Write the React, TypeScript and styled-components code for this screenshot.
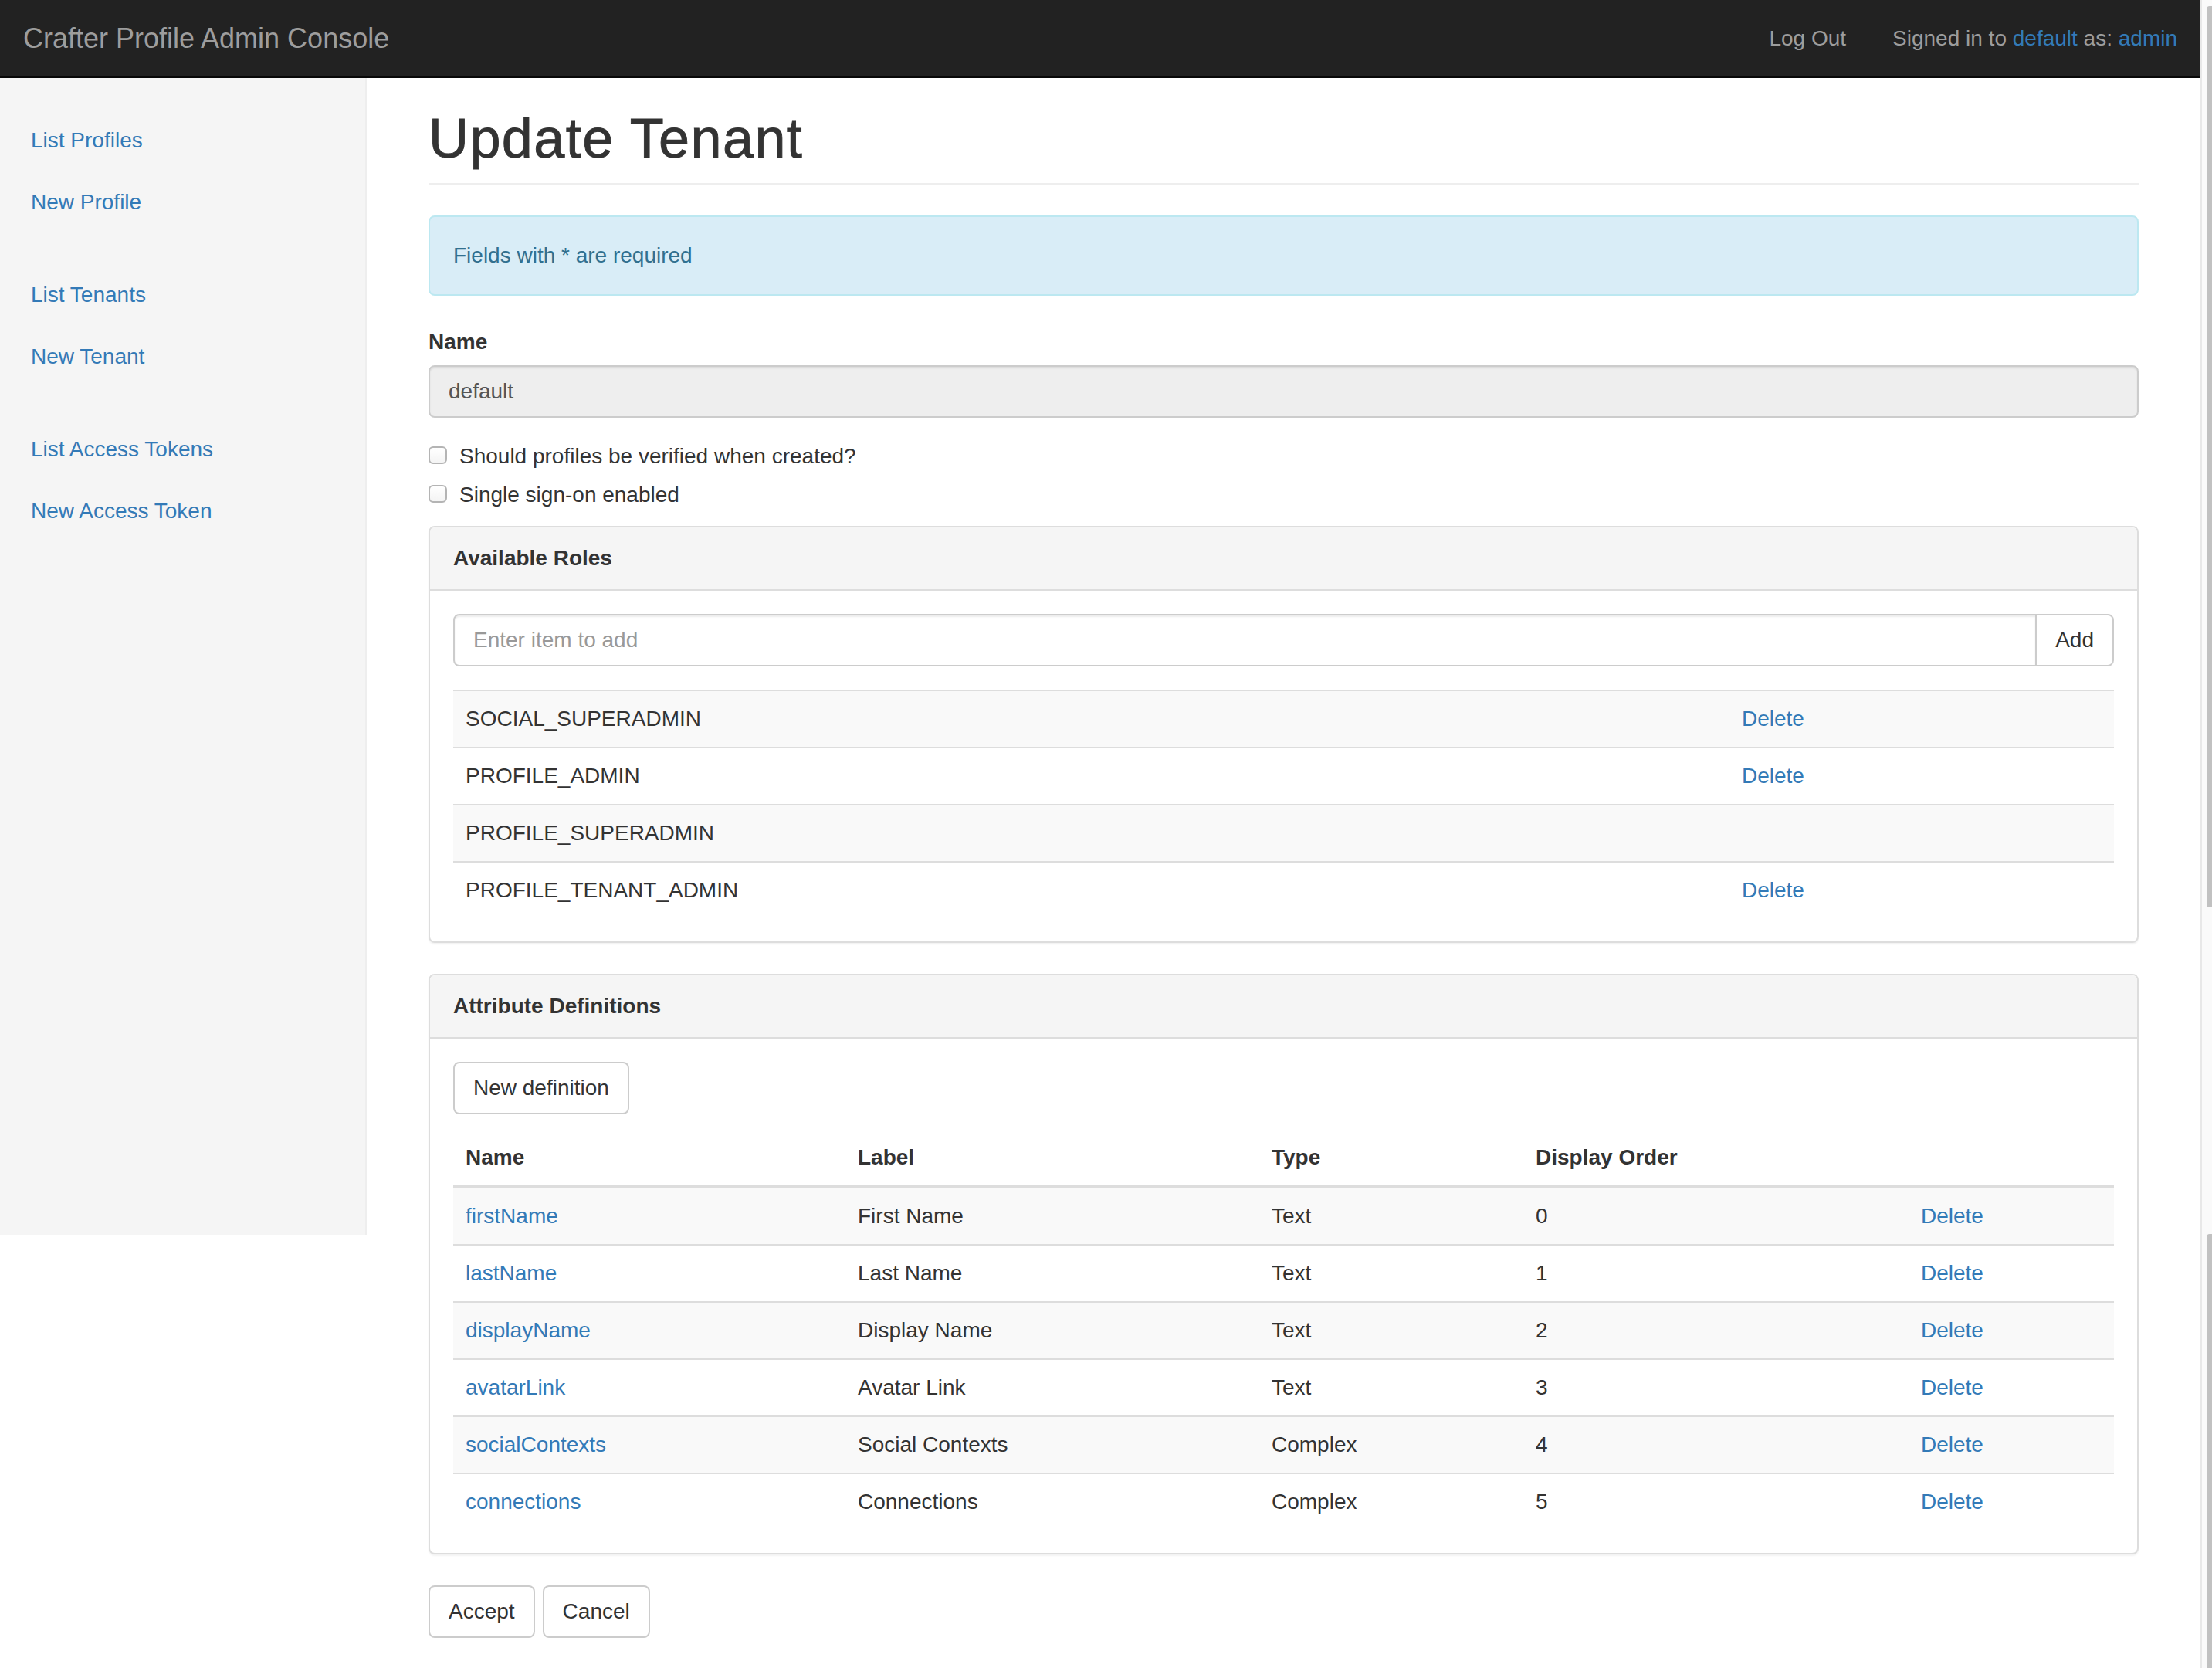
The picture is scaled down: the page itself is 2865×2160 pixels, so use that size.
import React from "react";
import styled, { createGlobalStyle } from "styled-components";

const GlobalStyle = createGlobalStyle`
  html, body {
    margin: 0;
    padding: 0;
    overflow: hidden;
    background: #fff;
  }
  body {
    font-family: "Liberation Sans", Arial, Helvetica, sans-serif;
    font-size: 28px;
    line-height: 40px;
    color: #333;
  }
  * { box-sizing: border-box; }
`;

const Shell = styled.div`
  display: flex;
  height: 2160px;
  overflow: hidden;
`;

const Page = styled.div`
  flex: 1;
  min-width: 0;
  display: flex;
  flex-direction: column;
`;

const ScrollTrack = styled.div`
  flex: none;
  width: 15px;
  background: #fafafa;
  border-left: 2px solid #e8e8e8;
  padding: 8px 0 0 6px;
  display: flex;
  flex-direction: column;
`;

const Thumb = styled.div<{ $h: number; $gap: number }>`
  flex: none;
  width: 7px;
  height: ${(p) => p.$h}px;
  margin-top: ${(p) => p.$gap}px;
  background: #c1c1c1;
  border-radius: 4px 0 0 4px;
`;

const Navbar = styled.nav`
  flex: none;
  height: 101px;
  background: #222;
  border-bottom: 2px solid #080808;
  display: flex;
  align-items: center;
  justify-content: space-between;
  padding-left: 30px;
`;

const Brand = styled.a`
  font-size: 36px;
  line-height: 40px;
  color: #9d9d9d;
  text-decoration: none;
`;

const NavRight = styled.div`
  display: flex;
  align-items: center;
`;

const NavLink = styled.a`
  color: #9d9d9d;
  text-decoration: none;
  padding: 0 30px;
`;

const NavText = styled.p`
  margin: 0 30px;
  color: #9d9d9d;
`;

const Link = styled.a`
  color: #337ab7;
  text-decoration: none;
`;

const Body = styled.div`
  display: flex;
  align-items: flex-start;
  flex: 1;
  min-height: 0;
`;

const Sidebar = styled.aside`
  flex: none;
  width: 475px;
  height: 1498px;
  background: #f5f5f5;
  border-right: 2px solid #eee;
  padding: 41px 0;
`;

const NavGroup = styled.ul`
  list-style: none;
  margin: 0 0 40px;
  padding: 0;
`;

const NavItem = styled.li`
  display: block;
`;

const SideLink = styled.a`
  display: block;
  padding: 20px 40px;
  color: #337ab7;
  text-decoration: none;
`;

const Main = styled.main`
  flex: 1;
  min-width: 0;
  padding: 39px 80px 0 80px;
`;

const PageHeader = styled.h1`
  margin: 0 0 40px;
  padding-bottom: 18px;
  border-bottom: 2px solid #eee;
  font-size: 72px;
  line-height: 1.1;
  font-weight: 500;
  letter-spacing: 1.4px;
  color: #333;
  -webkit-text-stroke: 0.9px #333;
`;

const Alert = styled.div`
  padding: 30px;
  margin-bottom: 40px;
  border: 2px solid #bce8f1;
  border-radius: 8px;
  background: #d9edf7;
  color: #31708f;
`;

const FormGroup = styled.div`
  margin-bottom: 30px;
`;

const FieldLabel = styled.label`
  display: block;
  margin-bottom: 10px;
  font-weight: bold;
`;

const TextInput = styled.input<{ $disabled?: boolean }>`
  display: block;
  width: 100%;
  height: 68px;
  padding: 12px 24px;
  font-family: inherit;
  font-size: 28px;
  line-height: 40px;
  color: #555;
  background: ${(p) => (p.$disabled ? "#eee" : "#fff")};
  border: 2px solid #ccc;
  border-radius: 8px;
  box-shadow: inset 0 2px 2px rgba(0, 0, 0, 0.075);
  outline: none;
  &::placeholder {
    color: #999;
  }
`;

const Checks = styled.div`
  margin-bottom: 20px;
  display: flex;
  flex-direction: column;
  gap: 10px;
`;

const CheckLabel = styled.label`
  display: flex;
  align-items: flex-start;
  gap: 16px;
  min-height: 40px;
  font-weight: normal;
`;

const CheckBox = styled.input`
  appearance: none;
  -webkit-appearance: none;
  flex: none;
  margin: 7px 0 0 0;
  width: 24px;
  height: 23px;
  border: 2px solid #b4b4b4;
  border-radius: 6px;
  background: linear-gradient(#fff, #f4f4f4);
`;

const Panel = styled.section`
  margin-bottom: 40px;
  background: #fff;
  border: 2px solid #ddd;
  border-radius: 8px;
  box-shadow: 0 2px 2px rgba(0, 0, 0, 0.05);
`;

const PanelHeading = styled.div`
  padding: 20px 30px;
  background: #f5f5f5;
  border-bottom: 2px solid #ddd;
  border-radius: 6px 6px 0 0;
  font-weight: bold;
`;

const PanelBody = styled.div`
  padding: 30px;
`;

const InputGroup = styled.div`
  display: flex;
  margin-bottom: 30px;
`;

const GroupInput = styled(TextInput)`
  flex: 1;
  border-radius: 8px 0 0 8px;
`;

const Button = styled.button<{ $join?: boolean }>`
  display: inline-block;
  flex: none;
  height: 68px;
  padding: 12px 24px;
  margin: 0;
  font-family: inherit;
  font-size: 28px;
  line-height: 40px;
  color: #333;
  background: #fff;
  border: 2px solid #ccc;
  border-radius: ${(p) => (p.$join ? "0 8px 8px 0" : "8px")};
  margin-left: ${(p) => (p.$join ? "-2px" : "0")};
  cursor: pointer;
`;

const ToolRow = styled.div`
  margin-bottom: 20px;
`;

const Table = styled.table`
  width: 100%;
  border-collapse: collapse;
  border-spacing: 0;
  table-layout: fixed;
`;

const Col = styled.col<{ $w?: number }>`
  width: ${(p) => (p.$w ? `${p.$w}px` : "auto")};
`;

const Th = styled.th`
  padding: 16px;
  text-align: left;
  vertical-align: bottom;
  font-weight: bold;
  line-height: 40px;
  border-bottom: 4px solid #ddd;
`;

const Tr = styled.tr`
  &:nth-of-type(odd) {
    background: #f9f9f9;
  }
`;

const Td = styled.td`
  padding: 16px;
  line-height: 40px;
  vertical-align: top;
  border-top: 2px solid #ddd;
  white-space: nowrap;
`;

const Actions = styled.div`
  display: flex;
  gap: 10px;
`;

const roles: { name: string; del: boolean }[] = [
  { name: "SOCIAL_SUPERADMIN", del: true },
  { name: "PROFILE_ADMIN", del: true },
  { name: "PROFILE_SUPERADMIN", del: false },
  { name: "PROFILE_TENANT_ADMIN", del: true },
];

const attributes = [
  { name: "firstName", label: "First Name", type: "Text", order: 0 },
  { name: "lastName", label: "Last Name", type: "Text", order: 1 },
  { name: "displayName", label: "Display Name", type: "Text", order: 2 },
  { name: "avatarLink", label: "Avatar Link", type: "Text", order: 3 },
  { name: "socialContexts", label: "Social Contexts", type: "Complex", order: 4 },
  { name: "connections", label: "Connections", type: "Complex", order: 5 },
];

const sideGroups = [
  ["List Profiles", "New Profile"],
  ["List Tenants", "New Tenant"],
  ["List Access Tokens", "New Access Token"],
];

export default function App() {
  return (
    <>
      <GlobalStyle />
      <Shell>
        <Page>
          <Navbar>
            <Brand href="#">Crafter Profile Admin Console</Brand>
            <NavRight>
              <NavLink href="#">Log Out</NavLink>
              <NavText>
                Signed in to <Link href="#">default</Link> as: <Link href="#">admin</Link>
              </NavText>
            </NavRight>
          </Navbar>
          <Body>
            <Sidebar>
              {sideGroups.map((g, i) => (
                <NavGroup key={i}>
                  {g.map((item) => (
                    <NavItem key={item}>
                      <SideLink href="#">{item}</SideLink>
                    </NavItem>
                  ))}
                </NavGroup>
              ))}
            </Sidebar>
            <Main>
              <PageHeader>Update Tenant</PageHeader>
              <Alert>Fields with * are required</Alert>
              <FormGroup>
                <FieldLabel>Name</FieldLabel>
                <TextInput $disabled readOnly defaultValue="default" />
              </FormGroup>
              <Checks>
                <CheckLabel>
                  <CheckBox type="checkbox" />
                  Should profiles be verified when created?
                </CheckLabel>
                <CheckLabel>
                  <CheckBox type="checkbox" />
                  Single sign-on enabled
                </CheckLabel>
              </Checks>

              <Panel>
                <PanelHeading>Available Roles</PanelHeading>
                <PanelBody>
                  <InputGroup>
                    <GroupInput placeholder="Enter item to add" />
                    <Button $join>Add</Button>
                  </InputGroup>
                  <Table>
                    <colgroup>
                      <Col $w={1653} />
                      <Col />
                    </colgroup>
                    <tbody>
                      {roles.map((r) => (
                        <Tr key={r.name}>
                          <Td>{r.name}</Td>
                          <Td>{r.del ? <Link href="#">Delete</Link> : null}</Td>
                        </Tr>
                      ))}
                    </tbody>
                  </Table>
                </PanelBody>
              </Panel>

              <Panel>
                <PanelHeading>Attribute Definitions</PanelHeading>
                <PanelBody>
                  <ToolRow>
                    <Button>New definition</Button>
                  </ToolRow>
                  <Table>
                    <colgroup>
                      <Col $w={508} />
                      <Col $w={536} />
                      <Col $w={342} />
                      <Col $w={499} />
                      <Col />
                    </colgroup>
                    <thead>
                      <tr>
                        <Th>Name</Th>
                        <Th>Label</Th>
                        <Th>Type</Th>
                        <Th>Display Order</Th>
                        <Th />
                      </tr>
                    </thead>
                    <tbody>
                      {attributes.map((a) => (
                        <Tr key={a.name}>
                          <Td>
                            <Link href="#">{a.name}</Link>
                          </Td>
                          <Td>{a.label}</Td>
                          <Td>{a.type}</Td>
                          <Td>{a.order}</Td>
                          <Td>
                            <Link href="#">Delete</Link>
                          </Td>
                        </Tr>
                      ))}
                    </tbody>
                  </Table>
                </PanelBody>
              </Panel>

              <Actions>
                <Button>Accept</Button>
                <Button>Cancel</Button>
              </Actions>
            </Main>
          </Body>
        </Page>
        <ScrollTrack>
          <Thumb $h={1167} $gap={0} />
          <Thumb $h={600} $gap={423} />
        </ScrollTrack>
      </Shell>
    </>
  );
}
